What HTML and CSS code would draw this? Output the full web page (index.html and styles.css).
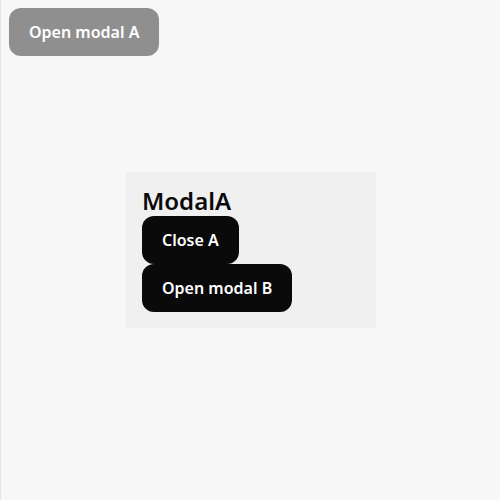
FILE: index.html
```html
<!DOCTYPE html>
<html>
<head>
<meta charset="utf-8">
<link rel="stylesheet" href="styles.css">
</head>
<body>
<div class="page">
  <button class="btn btn-muted">Open modal A</button>
</div>
<div class="modal">
  <h2 class="modal-title">ModalA</h2>
  <div class="modal-actions">
    <button class="btn btn-dark">Close A</button>
    <button class="btn btn-dark">Open modal B</button>
  </div>
</div>
</body>
</html>
```
FILE: styles.css
```css
html, body {
  margin: 0;
  padding: 0;
  background: #f7f7f7;
  font-family: "Noto Sans", "Open Sans", sans-serif;
}
.page {
  min-height: 100vh;
  box-sizing: border-box;
  border-left: 1px solid #e4e4e4;
  padding: 8px;
}
.btn {
  font-family: inherit;
  font-size: 16px;
  font-weight: 600;
  height: 48px;
  padding: 0 20px;
  border: none;
  border-radius: 12px;
  color: #fff;
  display: block;
  cursor: pointer;
}
.btn-muted {
  background: #8f8f8f;
}
.btn-dark {
  background: #0a0a0a;
}
.modal {
  position: fixed;
  left: 126px;
  top: 172px;
  width: 250px;
  box-sizing: border-box;
  background: #f0f0f0;
  padding: 14px 16px 16px;
}
.modal-title {
  margin: 0;
  font-size: 24px;
  font-weight: 600;
  line-height: 30px;
  color: #0a0a0a;
}
.modal-actions {
  display: flex;
  flex-direction: column;
  align-items: flex-start;
}
```
